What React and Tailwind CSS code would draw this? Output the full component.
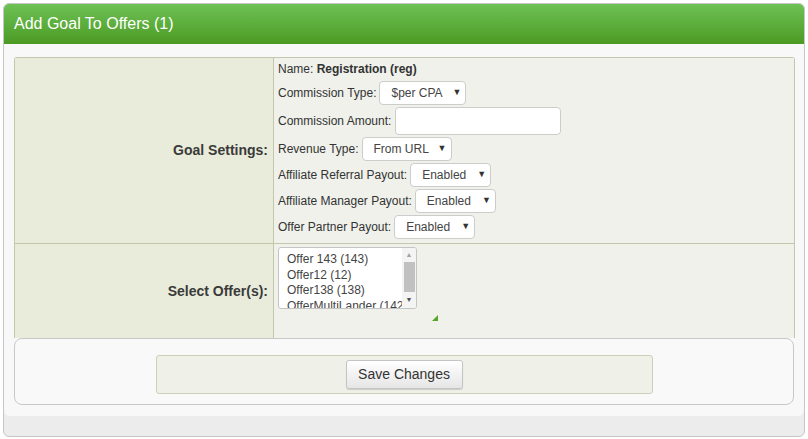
const offers = ['Offer 143 (143)', 'Offer12 (12)', 'Offer138 (138)', 'OfferMultiLander (142)']

function Select({ value, width }) {
  return (
    <div
      className={`flex items-center h-[24px] border border-[#cccccc] rounded-[4px] bg-white pl-[11px] pr-[4px] text-[12px] text-[#444] ${width}`}
    >
      <span>{value}</span>
      <span className="ml-auto text-[9px] text-[#333]">▼</span>
    </div>
  )
}

function Row({ label, children, gap = 'mr-[3px]' }) {
  return (
    <div className="flex items-center">
      <span className={gap}>{label}</span>
      {children}
    </div>
  )
}

export default function App() {
  return (
    <div className="w-[808px] h-[439px] bg-white p-[3px] font-['Liberation_Sans',Arial,sans-serif]">
      <div className="w-[802px] h-[434px] border border-[#c6c6c6] rounded-[6px] bg-[#ececec] overflow-hidden">
        {/* Header */}
        <div className="h-[40px] bg-gradient-to-b from-[#6dc254] to-[#4c9a21] flex items-center pl-[10px] pb-[1px] text-white text-[16px]">
          Add Goal To Offers (1)
        </div>

        <div className="bg-[#f8f8f8] rounded-b-[6px] pt-[13px] pl-[10px] pr-[9px] pb-[11px]">
          {/* Form table */}
          <div className="border-t border-x border-[#c3c7ab] rounded-t-[3px] text-[12px] text-[#333]">
            {/* Goal settings */}
            <div className="flex border-b border-[#c3c7ab]">
              <div className="w-[259px] bg-[#e9ecda] border-r border-[#c3c7ab] flex items-center justify-end pr-[5px] text-[14px] font-bold text-[#3a3a3a]">
                Goal Settings:
              </div>
              <div className="flex-1 bg-[#eff1ea] pl-[4px] pt-[1px] pb-[4px] flex flex-col gap-[2px]">
                <div className="h-[20px] flex items-center">
                  Name:&nbsp;<span className="font-bold">Registration (reg)</span>
                </div>
                <Row label="Commission Type:">
                  <Select value="$per CPA" width="w-[87px]" />
                </Row>
                <Row label="Commission Amount:" gap="mr-[4px]">
                  <input className="h-[28px] w-[166px] border border-[#cccccc] rounded-[4px] bg-white outline-none" />
                </Row>
                <Row label="Revenue Type:">
                  <Select value="From URL" width="w-[90px]" />
                </Row>
                <Row label="Affiliate Referral Payout:">
                  <Select value="Enabled" width="w-[81px]" />
                </Row>
                <Row label="Affiliate Manager Payout:">
                  <Select value="Enabled" width="w-[81px]" />
                </Row>
                <Row label="Offer Partner Payout:">
                  <Select value="Enabled" width="w-[81px]" />
                </Row>
              </div>
            </div>

            {/* Select offers */}
            <div className="flex h-[94px]">
              <div className="w-[259px] bg-[#e9ecda] border-r border-[#c3c7ab] flex items-center justify-end pr-[5px] text-[14px] font-bold text-[#3a3a3a]">
                Select Offer(s):
              </div>
              <div className="relative flex-1 bg-[#eff1ea] pl-[4px] pt-[3px]">
                <div className="relative w-[139px] h-[62px] border border-[#c4c4c4] rounded-[3px] bg-white overflow-hidden">
                  <div className="w-[124px] overflow-hidden pl-[8px] pt-[4px] text-[12px] leading-[15.5px] text-[#444] whitespace-nowrap">
                    {offers.map((o) => (
                      <div key={o}>{o}</div>
                    ))}
                  </div>
                  <div className="absolute right-0 top-0 bottom-0 w-[14px] bg-[#f4f4f4] flex flex-col items-center">
                    <span className="h-[14px] text-[7px] leading-[14px] text-[#a3a3a3]">▲</span>
                    <div className="w-[11px] h-[30px] bg-[#c1c1c1]" />
                    <span className="flex-1 flex items-center text-[7px] text-[#505050]">▼</span>
                  </div>
                </div>
                <div className="absolute left-[158px] top-[71px] w-0 h-0 border-l-[6px] border-l-transparent border-b-[6px] border-b-[#5aa528]" />
              </div>
            </div>
          </div>

          {/* Footer */}
          <div className="h-[67px] mr-[1px] border border-[#c8c8c8] rounded-[8px] bg-[#f9f9f9] pt-[16px] flex justify-center">
            <div className="w-[497px] h-[39px] border border-[#cdd0b8] rounded-[3px] bg-[#eff1e9] flex items-center justify-center">
              <button className="w-[117px] h-[29px] border border-[#c4c4c4] rounded-[3px] bg-gradient-to-b from-white to-[#e6e6e6] shadow-[0_1px_1px_rgba(0,0,0,0.15)] text-[14px] text-[#333]">
                Save Changes
              </button>
            </div>
          </div>
        </div>
      </div>
    </div>
  )
}
